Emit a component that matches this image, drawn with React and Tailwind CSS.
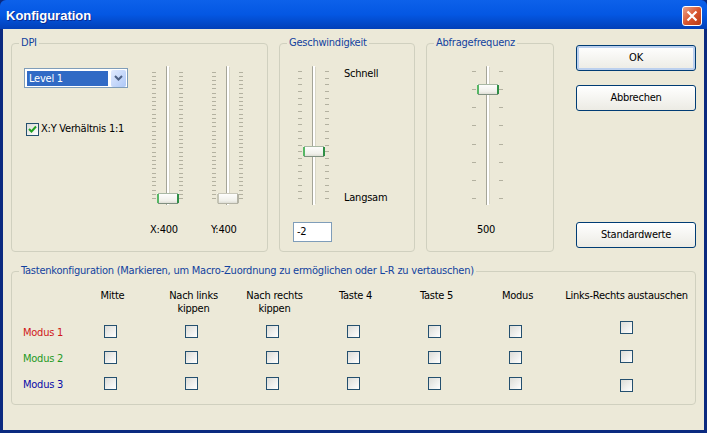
import React from 'react';

// XP-style dialog "Konfiguration"

const range = (n, from, to) => Array.from({ length: n }, (_, i) => from + (i * (to - from)) / (n - 1));

// track, ticks and thumb of a vertical trackbar
const Slider = ({ ticks, thumbY, active = true }) => (
    <svg width="33" height="139" className="block shrink-0">
        <defs>
            <linearGradient id="thumbFill" x1="0" y1="0" x2="0" y2="1">
                <stop offset="0" stopColor="#ffffff" />
                <stop offset="0.7" stopColor="#f0f0ea" />
                <stop offset="1" stopColor="#d6d6cc" />
            </linearGradient>
        </defs>
        {ticks.map((y, i) => (
            <g key={i} fill="#b3b1a0">
                <rect x="1" y={Math.round(y)} width="4" height="1" />
                <rect x="28" y={Math.round(y)} width="4" height="1" />
            </g>
        ))}
        <rect x="15" y="0" width="1" height="139" fill="#a5a598" rx="0.5" />
        <rect x="16" y="0" width="2" height="139" fill="#ffffff" />
        <rect x="18" y="1" width="1" height="137" fill="#d8d6c6" />
        <rect x="6" y={thumbY} width="22" height="11" rx="1.5" fill="url(#thumbFill)" stroke="none" />
        <rect x="7" y={thumbY} width="20" height="1" fill={active ? '#a9b8a4' : '#c9c8ba'} />
        <rect x="7" y={thumbY + 10} width="20" height="1" fill={active ? '#7f8f80' : '#b4b3a5'} />
        <rect x="6" y={thumbY + 1} width="2" height="9" fill={active ? '#57b765' : '#c6c5b6'} />
        <rect x="26" y={thumbY + 1} width="2" height="9" fill={active ? '#2f8f45' : '#b4b3a5'} />
    </svg>
);

const CheckBox = ({ checked, className = '' }) => (
    <span className={`block w-[13px] h-[13px] shrink-0 border border-[#24506f] bg-linear-to-br from-[#dcdcd7] to-white ${className}`}>
        {checked && (
            <svg width="11" height="11" viewBox="0 0 11 11" className="block">
                <path d="M2 5 L4.5 7.5 L9 2.5" fill="none" stroke="#21a121" strokeWidth="2" />
            </svg>
        )}
    </span>
);

const Group = ({ title, className = '', children }) => (
    <fieldset className={`border border-[#d0d0bf] rounded-[4px] ${className}`}>
        <legend className="ml-[7px] px-[2px] h-[14px] leading-[14px] text-[#12429e] whitespace-nowrap">{title}</legend>
        {children}
    </fieldset>
);

const XpButton = ({ label, isDefault, className = '' }) => (
    <button className={`block w-[120px] h-[26px] rounded-[3px] border border-[#003c74] bg-linear-to-b from-white to-[#ecebe4] text-black ${isDefault ? 'shadow-[inset_0_0_0_2px_#bcd0ee]' : ''} ${className}`}>
        {label}
    </button>
);

const KeyColumn = ({ header }) => (
    <div className="w-[81px] shrink-0 flex flex-col items-center">
        <div className="h-[36px] leading-[13px] text-center whitespace-pre-line">{header}</div>
        <div className="flex flex-col gap-[13px]">
            <CheckBox className="mr-[4px]" />
            <CheckBox className="mr-[4px]" />
            <CheckBox className="mr-[4px]" />
        </div>
    </div>
);

const App = () => (
    <div className="w-[707px] h-[433px] overflow-hidden flex flex-col bg-[#0b2a80] font-['DejaVu_Sans_Condensed','DejaVu_Sans',sans-serif] [font-stretch:condensed] text-[11px] tracking-[-0.235px] text-black">
        {/* Title bar */}
        <div className="h-[29px] shrink-0 rounded-t-[6px] flex items-center justify-between pl-[6px] pr-[5px] pt-[2px] bg-linear-to-b from-[#0d61ea] via-[#0457e3] to-[#0240b8]">
            <span className="font-['Liberation_Sans',sans-serif] font-bold text-[13px] tracking-normal text-white [text-shadow:1px_1px_0_#0a2a90]">Konfiguration</span>
            <span className="w-[20px] h-[20px] rounded-[3px] border border-white flex items-center justify-center bg-linear-to-br from-[#e9a38a] via-[#d9562f] to-[#b93a14]">
                <svg width="12" height="12" viewBox="0 0 12 12">
                    <path d="M1.5 1.5 L10.5 10.5 M10.5 1.5 L1.5 10.5" stroke="#ffffff" strokeWidth="2.2" />
                </svg>
            </span>
        </div>

        {/* Dialog body */}
        <div className="h-[401px] shrink-0 mx-[3px] bg-[#ece9d8] pl-[8px] pt-[7px]">
            <div className="flex h-[216px]">
                <Group title="DPI" className="w-[257px]">
                    <div className="flex">
                        <div className="w-[139px] shrink-0 pl-[12px] pt-[18px]">
                            <div className="w-[104px] h-[20px] border border-[#7f9db9] bg-white flex items-center pl-[2px] gap-[3px]">
                                <span className="w-[81px] h-[15px] leading-[15px] bg-[#316ac5] text-white pl-[2px]">Level 1</span>
                                <span className="w-[15px] h-[17px] rounded-[2px] bg-linear-to-br from-[#e1eafe] to-[#aec8f7] flex items-center justify-center">
                                    <svg width="9" height="7" viewBox="0 0 9 7">
                                        <path d="M1 1 L4.5 4.5 L8 1" fill="none" stroke="#4d6185" strokeWidth="2" />
                                    </svg>
                                </span>
                            </div>
                            <div className="flex items-center gap-[2px] mt-[33px] ml-[2px] whitespace-nowrap">
                                <CheckBox checked />
                                <span>X:Y Verhältnis 1:1</span>
                            </div>
                        </div>
                        <div className="w-[33px] shrink-0 flex flex-col items-start pt-[16px]">
                            <Slider ticks={range(31, 5.5, 132)} thumbY={127} />
                            <span className="mt-[18px] -ml-[1px] leading-[14px] whitespace-nowrap">X:400</span>
                        </div>
                        <div className="w-[33px] shrink-0 flex flex-col items-start pt-[16px] ml-[27px]">
                            <Slider ticks={range(31, 5.5, 132)} thumbY={127} active={false} />
                            <span className="mt-[18px] leading-[14px] whitespace-nowrap">Y:400</span>
                        </div>
                    </div>
                </Group>

                <Group title="Geschwindigkeit" className="w-[136px] ml-[11px]">
                    <div className="pt-[16px] pl-[13px]">
                        <div className="flex pl-[4px]">
                            <Slider ticks={range(20, 5, 132)} thumbY={80} />
                            <div className="ml-[14px] h-[139px] pt-[1px] flex flex-col justify-between leading-[14px]">
                                <span>Schnell</span>
                                <span>Langsam</span>
                            </div>
                        </div>
                        <div className="mt-[17px] w-[39px] h-[20px] border border-[#7f9db9] bg-white pl-[3px] leading-[18px]">-2</div>
                    </div>
                </Group>

                <Group title="Abfragefrequenz" className="w-[128px] ml-[11px]">
                    <div className="flex flex-col items-start pt-[16px] pl-[44px]">
                        <Slider ticks={[5, 23, 41, 59, 78, 96, 114, 132]} thumbY={18} />
                        <span className="mt-[18px] ml-[6px] leading-[14px]">500</span>
                    </div>
                </Group>

                <div className="ml-[22px] pt-[9px] flex flex-col">
                    <XpButton label="OK" isDefault />
                    <XpButton label="Abbrechen" className="mt-[14px]" />
                    <XpButton label="Standardwerte" className="mt-[111px]" />
                </div>
            </div>

            <Group title="Tastenkonfiguration (Markieren, um Macro-Zuordnung zu ermöglichen oder L-R zu vertauschen)" className="mt-[12px] w-[685px] h-[141px]">
                <div className="flex pt-[11px] pl-[11px]">
                    <div className="w-[49px] shrink-0 pt-[37px] flex flex-col gap-[12px] leading-[14px] whitespace-nowrap">
                        <span className="text-[#d01818]">Modus 1</span>
                        <span className="text-[#1f9a1f]">Modus 2</span>
                        <span className="text-[#0a0aa8]">Modus 3</span>
                    </div>
                    <KeyColumn header="Mitte" />
                    <KeyColumn header={'Nach links\nkippen'} />
                    <KeyColumn header={'Nach rechts\nkippen'} />
                    <KeyColumn header="Taste 4" />
                    <KeyColumn header="Taste 5" />
                    <KeyColumn header="Modus" />
                    <div className="w-[137px] shrink-0 flex flex-col items-center">
                        <div className="h-[32px] leading-[13px] whitespace-nowrap">Links-Rechts austauschen</div>
                        <div className="flex flex-col gap-[16px]">
                            <CheckBox />
                            <CheckBox />
                            <CheckBox />
                        </div>
                    </div>
                </div>
            </Group>
        </div>
    </div>
);

export default App;
